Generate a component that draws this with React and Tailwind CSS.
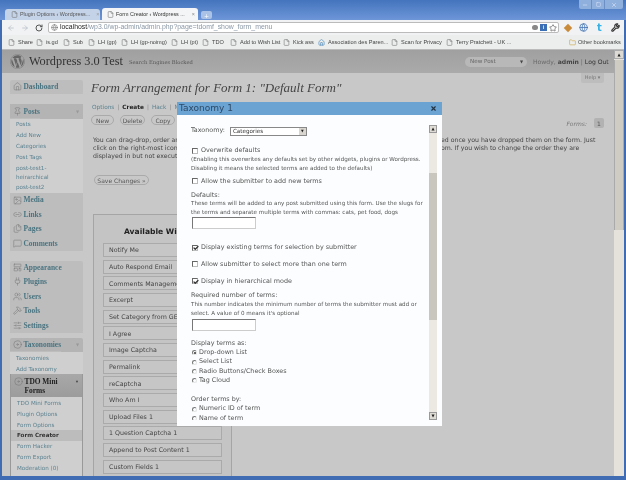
import { ArrowLeft, ArrowRight, RotateCw, Star, Wrench, File, Folder, Home, Pin, Image, Link2, Files, MessageSquare, LayoutTemplate, Plug, Users, Hammer, SlidersHorizontal, Disc, Globe, Minus, Square, X, Check as CheckIcon } from "lucide-react";
import { FaWordpress } from "react-icons/fa";

const marks = [
  ["Share", 18], ["is.gd", 46], ["Sub", 73], ["LH (gp)", 98], ["LH (gp-noimg)", 131], ["LH (pt)", 181], ["TDO", 212], ["Add to Wish List", 240], ["Kick ass", 293],
];
const widgets = ["Notify Me", "Auto Respond Email", "Comments Management", "Excerpt", "Set Category from GET", "I Agree", "Image Captcha", "Permalink", "reCaptcha", "Who Am I", "Upload Files 1", "1 Question Captcha 1", "Append to Post Content 1", "Custom Fields 1"];

function MenuRow({ icon: Icon, label }) {
  return (
    <div className="flex items-center h-[14.4px] pl-[3px] gap-[1.5px] border-b border-[#bdbdbd]">
      <Icon size={9} strokeWidth={1.4} className="text-[#777] shrink-0" />
      <span className="font-['Liberation_Serif',serif] text-[7.4px] font-bold text-[#4a7480]">{label}</span>
    </div>
  );
}

function SubRow({ children, bold }) {
  return <div className={"pl-[6px] text-[5.6px] h-[10.85px] leading-[10.85px] font-['DejaVu_Sans',sans-serif] " + (bold ? "font-bold text-[#333] bg-[#bcbcbc]" : "text-[#5b8290]")}>{children}</div>;
}

function Check({ on }) {
  return (
    <span className="relative w-[6px] h-[6px] border border-t-[#666] border-l-[#666] border-r-[#bbb] border-b-[#bbb] bg-white mr-[3px] ml-[1px] shrink-0">
      {on && <CheckIcon size={6} strokeWidth={5} className="absolute left-[-0.5px] top-[-0.5px] text-[#333]" />}
    </span>
  );
}

function CheckRow({ on, mt, children }) {
  return <div className={"flex items-center h-[9px] text-[6.4px] " + mt}><Check on={on} />{children}</div>;
}

function Radio({ on, children }) {
  return (
    <div className="flex items-center h-[9.3px] text-[6.4px]">
      <span className="w-[5px] h-[5px] rounded-full border border-t-[#777] border-l-[#777] border-r-[#e4e4e4] border-b-[#e4e4e4] mr-[2px] ml-[1px] flex items-center justify-center">
        {on && <span className="w-[2px] h-[2px] rounded-full bg-[#333]" />}
      </span>
      {children}
    </div>
  );
}

function PillBtn({ w, children }) {
  return <div className={"h-[10px] rounded-full border border-[#aaa] text-[6px] flex items-center justify-center text-[#555] " + w}>{children}</div>;
}

export default function App() {
  return (
    <div className="relative w-[626px] h-[480px] overflow-hidden bg-[#3f6cb3] flex flex-col font-['DejaVu_Sans',sans-serif] blur-[0.35px]">
      {/* title bar and tabs */}
      <div className="h-[20px] shrink-0 bg-gradient-to-b from-[#4474bd] to-[#6d96d8] flex items-end pl-[5px] relative">
        <div className="w-[95px] h-[11px] bg-[#c4d3e8] rounded-t-[3px] flex items-center pl-[6px] text-[5.4px] text-[#555] gap-[2px] whitespace-nowrap overflow-hidden font-['Liberation_Sans',sans-serif]">
          <File size={7} className="text-[#777] shrink-0" />Plugin Options ‹ Wordpress...<span className="ml-[4px] text-[#999]">×</span>
        </div>
        <div className="w-[96px] h-[12px] ml-[2px] bg-[#f4f5f6] rounded-t-[3px] flex items-center pl-[5px] text-[5.4px] text-[#333] gap-[2px] whitespace-nowrap overflow-hidden font-['Liberation_Sans',sans-serif]">
          <File size={7} className="text-[#777] shrink-0" />Form Creator ‹ Wordpress ...<span className="ml-[5px] text-[#888]">×</span>
        </div>
        <div className="w-[11px] h-[8px] ml-[3px] mb-[1px] bg-[#a9c2e6] rounded-[2px] text-[6px] text-white flex items-center justify-center">+</div>
        <div className="absolute right-[3px] top-0 w-[44px] h-[9px] flex rounded-b-[2px] bg-[#8fb0dd] text-[#eef] divide-x divide-[#6d90c4]">
          <div className="w-[13px] flex items-center justify-center"><Minus size={6} /></div>
          <div className="w-[13px] flex items-center justify-center"><Square size={5} /></div>
          <div className="flex-1 flex items-center justify-center"><X size={6} /></div>
        </div>
      </div>

      {/* toolbar */}
      <div className="h-[15px] shrink-0 mx-[2px] bg-[#f1f2f3] flex items-center pl-[5px] pr-[4px]">
        <ArrowLeft size={8} className="text-[#b0b8c2]" />
        <ArrowRight size={8} className="text-[#b0b8c2] ml-[6px]" />
        <RotateCw size={8} strokeWidth={3} className="text-[#555] ml-[6px]" />
        <div className="ml-[5px] w-[511px] h-[11px] bg-white border border-[#bbb] rounded-[2px] flex items-center pl-[2px] text-[6.9px] font-['Liberation_Sans',sans-serif] text-[#8a97a5]">
          <Globe size={7} className="text-[#777] mr-[2px]" />
          <span className="text-[#222]">localhost</span>/wp3.0/wp-admin/admin.php?page=tdomf_show_form_menu
          <span className="ml-auto flex items-center gap-[2px] pr-[1px]">
            <span className="w-[6px] h-[5px] rounded-full bg-[#888]" />
            <span className="w-[7px] h-[7px] bg-[#3a6fb5] text-white text-[5px] leading-[7px] text-center font-bold">i</span>
            <Star size={8} className="text-[#555]" />
          </span>
        </div>
        <span className="ml-[6px] w-[6px] h-[6px] rotate-45 bg-[#c98a3a]" />
        <Globe size={9} className="ml-[8px] text-[#3a6fb5]" />
        <span className="ml-[9px] text-[10px] leading-none font-bold text-[#35b2e6]">t</span>
        <Wrench size={9} strokeWidth={3} className="ml-[9px] text-[#333]" />
      </div>

      {/* bookmarks */}
      <div className="h-[15px] shrink-0 mx-[2px] bg-[#eceded] border-b border-[#bbb] relative font-['Liberation_Sans',sans-serif] text-[5.6px] text-[#444]">
        {marks.map(([name, x]) => (
          <div key={name} className="absolute top-[3px] flex items-center gap-[3px]" style={{ left: x - 12 }}>
            <File size={7} className="text-[#777]" />{name}
          </div>
        ))}
        <div className="absolute top-[3px] left-[316px] flex items-center gap-[3px]"><Home size={7} className="text-[#3a7fb5]" />Association des Paren...</div>
        <div className="absolute top-[3px] left-[389px] flex items-center gap-[3px]"><File size={7} className="text-[#777]" />Scan for Privacy</div>
        <div className="absolute top-[3px] left-[444px] flex items-center gap-[3px]"><File size={7} className="text-[#777]" />Terry Pratchett - UK ...</div>
        <div className="absolute top-[3px] left-[567px] flex items-center gap-[2px]"><Folder size={7} className="text-[#c9a23a]" />Other bookmarks</div>
      </div>

      {/* page */}
      <div className="flex-1 min-h-0 mx-[2px] mb-[4px] flex relative">
        <div className="flex-1 min-w-0 bg-[#c8c8c8] flex flex-col overflow-hidden">
          <div className="h-[23px] shrink-0 bg-gradient-to-b from-[#a0a0a0] to-[#aaaaaa] flex items-center pl-[8px]">
            <FaWordpress size={15} className="text-[#666]" />
            <span className="ml-[4px] font-['Liberation_Serif',serif] text-[12.3px] text-[#333]">Wordpress 3.0 Test</span>
            <span className="ml-[6px] font-['DejaVu_Serif',serif] text-[5.2px] text-[#555] mt-[2px]">Search Engines Blocked</span>
            <div className="ml-auto w-[62px] h-[10px] rounded-full bg-[#b8b8b8] flex items-center pl-[5px] text-[5.6px] text-[#666]">
              New Post<span className="ml-auto mr-[4px] text-[4px] text-[#444]">▼</span>
            </div>
            <div className="ml-[6px] mr-[6px] text-[6.1px] text-[#6a6a6a] w-[75px] whitespace-nowrap">Howdy, <b className="text-[#444]">admin</b> | <span className="text-[#333]">Log Out</span></div>
          </div>

          <div className="flex-1 min-h-0 flex relative">
            {/* sidebar */}
            <div className="w-[89px] shrink-0 pl-[8px] pr-[8px] pt-[7px]">
              <div className="rounded-[2px] bg-[#bdbdbd]"><MenuRow icon={Home} label="Dashboard" /></div>
              <div className="h-[10px]" />
              <div className="rounded-[2px] bg-[#c2c2c2]">
                <div className="flex items-center justify-between pr-[4px] bg-[#b4b4b4]">
                  <MenuRow icon={Pin} label="Posts" /><span className="text-[4px] text-[#999]">▼</span>
                </div>
                <div className="bg-[#cfcfcf] py-[0.5px]">
                  {["Posts", "Add New", "Categories", "Post Tags"].map((t) => <SubRow key={t}>{t}</SubRow>)}
                  <SubRow>post-test1-</SubRow>
                  <div className="pl-[6px] text-[5.6px] -mt-[1.5px] h-[10px] leading-[10px] text-[#5b8290]">heirarchical</div>
                  <SubRow>post-test2</SubRow>
                </div>
                <div className="bg-[#bdbdbd]">
                  <MenuRow icon={Image} label="Media" />
                  <MenuRow icon={Link2} label="Links" />
                  <MenuRow icon={Files} label="Pages" />
                  <MenuRow icon={MessageSquare} label="Comments" />
                </div>
              </div>
              <div className="h-[10px]" />
              <div className="rounded-[2px] bg-[#bdbdbd]">
                <MenuRow icon={LayoutTemplate} label="Appearance" />
                <MenuRow icon={Plug} label="Plugins" />
                <MenuRow icon={Users} label="Users" />
                <MenuRow icon={Hammer} label="Tools" />
                <MenuRow icon={SlidersHorizontal} label="Settings" />
              </div>
              <div className="h-[5px]" />
              <div className="flex items-center justify-between pr-[4px] bg-[#b4b4b4] rounded-t-[2px]">
                <MenuRow icon={Disc} label="Taxonomies" /><span className="text-[4px] text-[#999]">▼</span>
              </div>
              <div className="bg-[#cfcfcf] pt-[0.5px]">
                <SubRow>Taxonomies</SubRow>
                <SubRow>Add Taxonomy</SubRow>
              </div>
              <div className="border-x border-[#999]">
                <div className="h-[23px] bg-gradient-to-b from-[#a8a8a8] to-[#9c9c9c] flex pl-[3px] pt-[3px] gap-[1.5px] pr-[3px] font-['Liberation_Serif',serif] text-[7.4px] font-bold leading-[9px] text-[#222]">
                  <Disc size={9} strokeWidth={1.4} className="text-[#777] shrink-0" />
                  <span className="w-[34px]">TDO Mini Forms</span>
                  <span className="ml-auto text-[4px] text-[#444]">▼</span>
                </div>
                <div className="bg-[#cfcfcf] py-[0.5px]">
                  <SubRow>TDO Mini Forms</SubRow>
                  <SubRow>Plugin Options</SubRow>
                  <SubRow>Form Options</SubRow>
                  <SubRow bold>Form Creator</SubRow>
                  <SubRow>Form Hacker</SubRow>
                  <SubRow>Form Export</SubRow>
                  <SubRow>Moderation (0)</SubRow>
                  <SubRow>Users and IPs</SubRow>
                </div>
              </div>
            </div>

            {/* main column */}
            <div className="flex-1 min-w-0 text-[#444]">
              <div className="flex justify-end pr-[10px]">
                <div className="w-[23px] h-[10px] rounded-b-[2px] bg-[#bdbdbd] text-[5px] text-[#777] flex items-center justify-center">Help ▾</div>
              </div>
              <h1 className="font-['Liberation_Serif',serif] italic text-[13px] leading-[18px] text-[#444] whitespace-nowrap -mt-[4px]">Form Arrangement for Form 1: "Default Form"</h1>
              <div className="mt-[6px] flex justify-between items-start pr-[10px]">
                <div>
                  <div className="text-[5.8px] leading-[8px] ml-[1px] whitespace-nowrap text-[#888] flex">
                    <span className="text-[#5b8290]">Options</span><span className="mx-[3px]">|</span><b className="text-[#222]">Create</b><span className="mx-[3px]">|</span><span className="text-[#5b8290]">Hack</span><span className="mx-[3px]">|</span><span className="text-[#5b8290]">M</span>
                  </div>
                  <div className="flex gap-[6px] mt-[4px]">
                    <PillBtn w="w-[23px]">New</PillBtn>
                    <PillBtn w="w-[25px]">Delete</PillBtn>
                    <PillBtn w="w-[24px]">Copy</PillBtn>
                  </div>
                </div>
                <div className="flex items-center mt-[15px] text-[6px] italic text-[#777]">
                  Forms:<span className="ml-[7px] w-[10px] h-[10px] rounded-[2px] bg-[#b2b2b2] not-italic text-[#555] flex items-center justify-center">1</span>
                </div>
              </div>
              <div className="ml-[2px] mt-[8px] text-[6.2px] leading-[8px] text-[#444]">
                <div className="flex whitespace-nowrap"><span className="w-[84px] mr-[264px] overflow-hidden">You can drag-drop, order and</span><span>ed once you have dropped them on the form. Just</span></div>
                <div className="flex whitespace-nowrap"><span className="w-[84px] mr-[264px] overflow-hidden">click on the right-most icon of</span><span>om. If you wish to change the order they are</span></div>
                <div className="w-[84px] overflow-hidden whitespace-nowrap">displayed in but not executed</div>
              </div>
              <div className="ml-[3px] mt-[15px] w-[55px] h-[10px] rounded-full border border-[#aaa] text-[6px] flex items-center justify-center text-[#555]">Save Changes »</div>
              <div className="ml-[2px] mt-[29px] w-[139px] h-[300px] border border-[#a5a5a5] bg-[#c4c4c4] px-[9px] pt-[11px]">
                <div className="text-center text-[7.6px] font-bold text-[#222] whitespace-nowrap">Available Widgets</div>
                <div className="mt-[5.6px] flex flex-col gap-[2.67px]">
                  {widgets.map((w) => (
                    <div key={w} className="h-[14px] shrink-0 border border-[#aaa] bg-[#c6c6c6] flex items-center pl-[5px] text-[6.3px] text-[#444] whitespace-nowrap">{w}</div>
                  ))}
                </div>
              </div>
            </div>
          </div>
        </div>

        {/* page scrollbar */}
        <div className="w-[10px] shrink-0 bg-[#e4e2da] flex flex-col">
          <div className="h-[9px] bg-[#dcdad2] border border-[#aaa] text-[4px] leading-[7px] text-center text-[#222]">▲</div>
          <div className="w-full h-[170px] bg-[#cfccc3] mt-[1px] border-x border-[#aaa]" />
        </div>
      </div>

      {/* dialog */}
      <div className="absolute left-[177px] top-[102px] w-[265px] h-[324px] bg-[#fbfdfe] flex flex-col text-[#555]">
        <div className="h-[13px] shrink-0 bg-[#6ba3d3] flex items-center justify-between pl-[2px] pr-[5px] text-[9px] text-[#2d4a66]">
          Taxonomy 1<X size={7} strokeWidth={4} className="text-[#234]" />
        </div>
        <div className="flex-1 min-h-0 flex pt-[10px] pb-[6px] pr-[5px]">
          <div className="flex-1 min-w-0 pl-[14px] pt-[1px] overflow-hidden whitespace-nowrap">
            <div className="flex items-center h-[10px] text-[6.4px]">
              Taxonomy:
              <div className="ml-[5px] w-[77px] h-[9px] border border-[#888] bg-white flex items-center justify-between text-[5.6px] pl-[2px] text-[#333]">
                Categories<span className="w-[7px] h-[7px] bg-[#d8d6ce] text-[3.5px] leading-[7px] text-center text-[#222]">▼</span>
              </div>
            </div>
            <CheckRow mt="mt-[10px]">Overwrite defaults</CheckRow>
            <div className="text-[5.6px] leading-[9.2px]">(Enabling this overwrites any defaults set by other widgets, plugins or Wordpress.<br />Disabling it means the selected terms are added to the defaults)</div>
            <CheckRow mt="mt-[3.5px]">Allow the submitter to add new terms</CheckRow>
            <div className="text-[6.4px] leading-[9px] mt-[5px]">Defaults:</div>
            <div className="text-[5.6px] leading-[8.8px] -mt-[1px]">These terms will be added to any post submitted using this form. Use the slugs for<br />the terms and separate multiple terms with commas: cats, pet food, dogs</div>
            <div className="w-[64px] h-[12px] ml-[1px] border border-[#ccc] border-t-[#777] border-l-[#777] bg-white" />
            <CheckRow on mt="mt-[14.8px]">Display existing terms for selection by submitter</CheckRow>
            <CheckRow mt="mt-[7.5px]">Allow submitter to select more than one term</CheckRow>
            <CheckRow on mt="mt-[8px]">Display in hierarchical mode</CheckRow>
            <div className="text-[6.4px] leading-[9px] mt-[5px]">Required number of terms:</div>
            <div className="text-[5.6px] leading-[9.2px]">This number indicates the minimum number of terms the submitter must add or<br />select. A value of 0 means it's optional</div>
            <div className="w-[64px] h-[12px] mt-[1px] ml-[1px] border border-[#ccc] border-t-[#777] border-l-[#777] bg-white" />
            <div className="text-[6.4px] leading-[9px] mt-[8px]">Display terms as:</div>
            <Radio on>Drop-down List</Radio>
            <Radio>Select List</Radio>
            <Radio>Radio Buttons/Check Boxes</Radio>
            <Radio>Tag Cloud</Radio>
            <div className="text-[6.4px] leading-[9px] mt-[10px]">Order terms by:</div>
            <Radio>Numeric ID of term</Radio>
            <Radio>Name of term</Radio>
          </div>
          {/* dialog scrollbar */}
          <div className="w-[8px] shrink-0 bg-[#ebe9e2] flex flex-col">
            <div className="h-[8px] shrink-0 bg-[#dedcd4] border border-[#999] text-[4px] leading-[6px] text-center text-[#222]">▲</div>
            <div className="h-[147px] mt-[40px] bg-[#c9c6bd]" />
            <div className="mt-auto h-[8px] shrink-0 bg-[#dedcd4] border border-[#999] text-[4px] leading-[6px] text-center text-[#222]">▼</div>
          </div>
        </div>
      </div>
    </div>
  );
}
